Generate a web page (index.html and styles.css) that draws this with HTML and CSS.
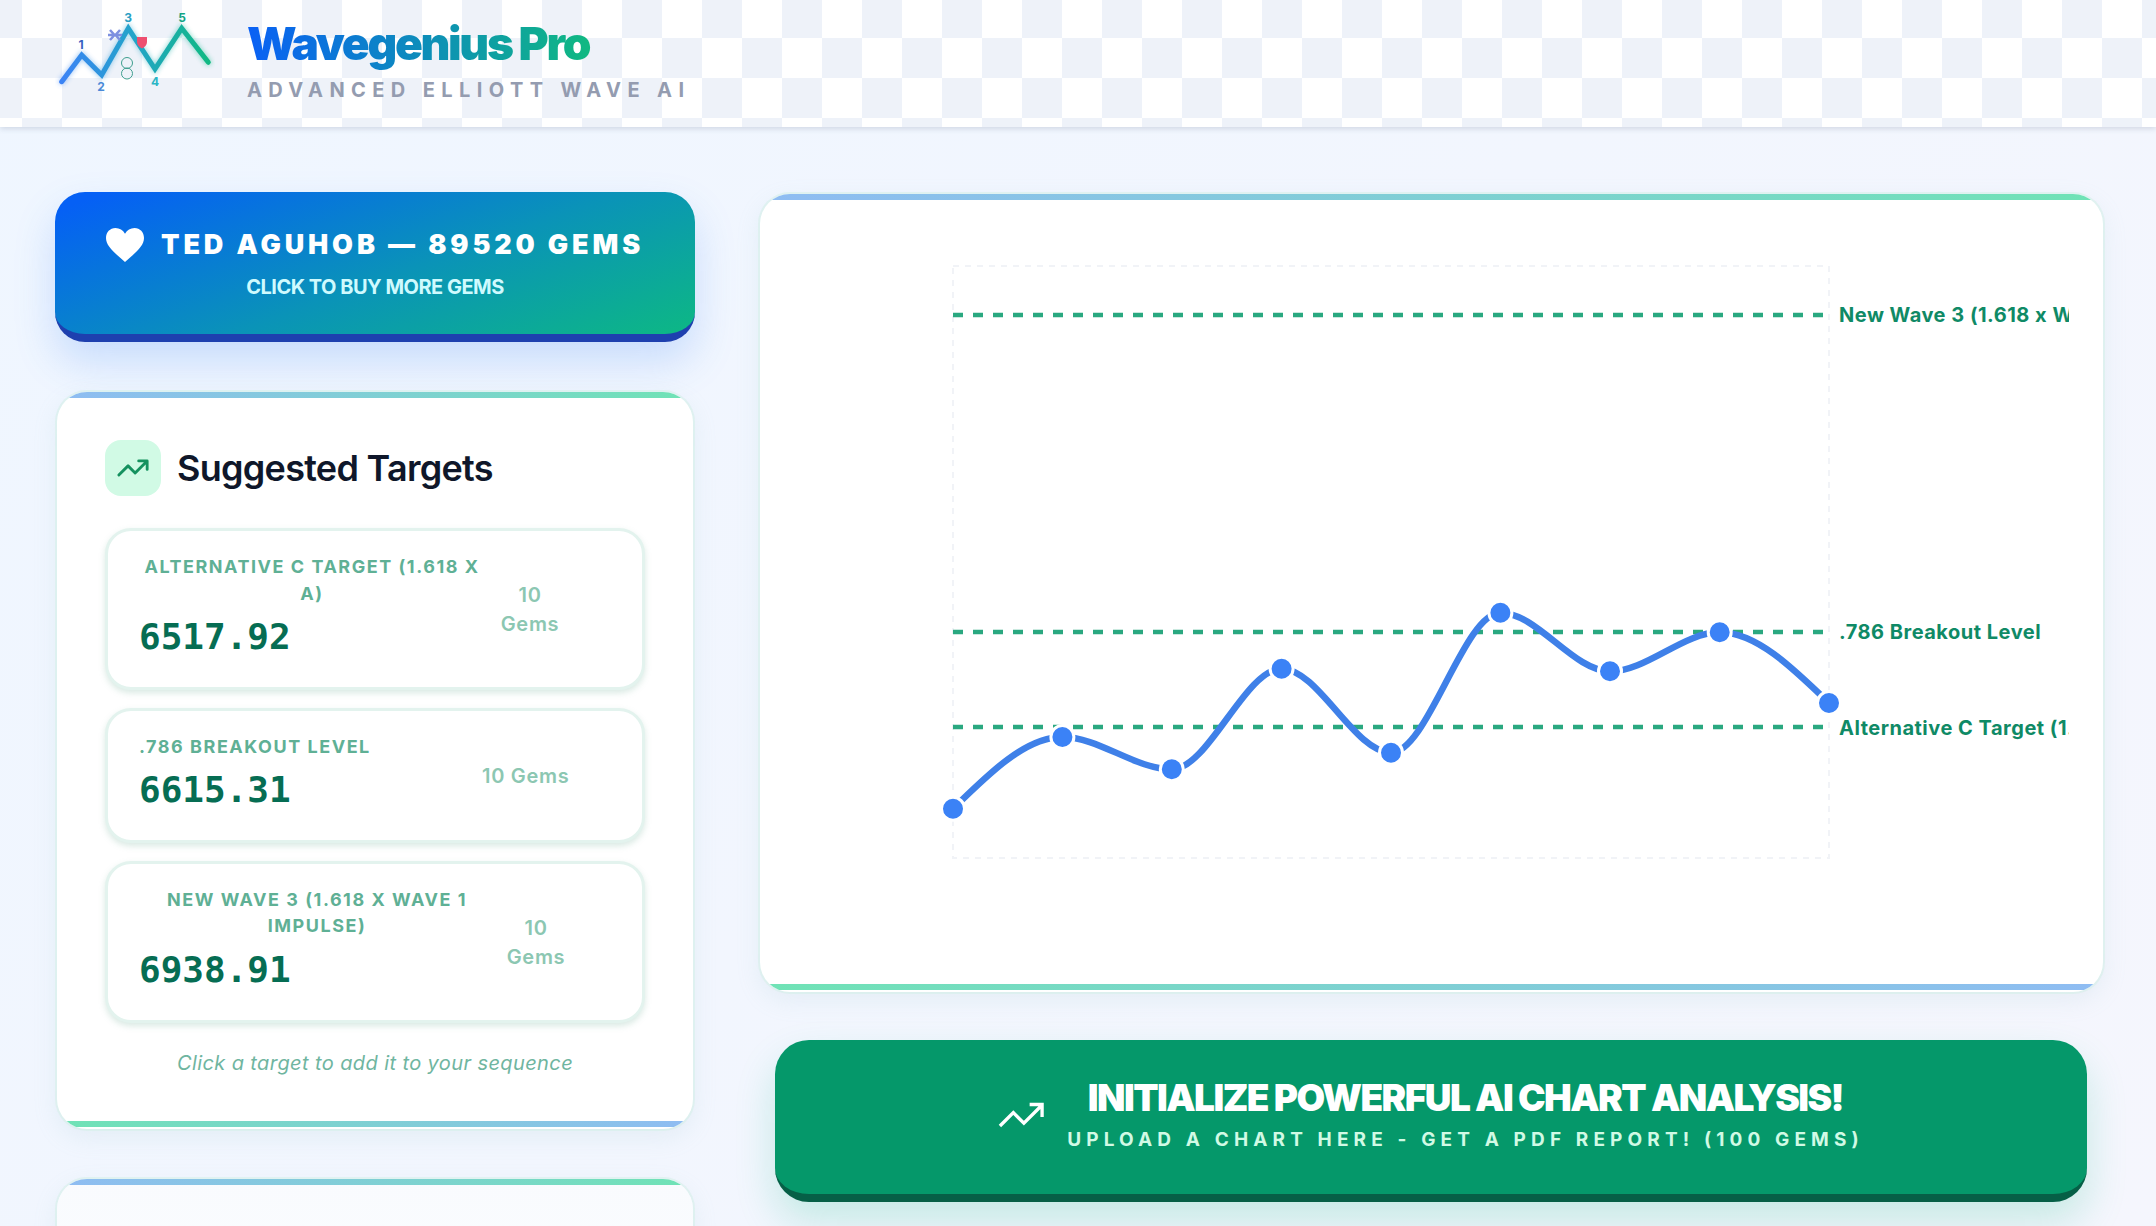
FILE: index.html
```html
<!DOCTYPE html>
<html lang="en">
<head>
<meta charset="utf-8">
<title>Wavegenius Pro</title>
<link rel="stylesheet" href="styles.css">
</head>
<body>
<header class="topbar">
  <svg class="logo" viewBox="55 0 160 127" width="160" height="127" aria-hidden="true">
    <defs>
      <linearGradient id="lg" gradientUnits="userSpaceOnUse" x1="60" y1="0" x2="210" y2="0">
        <stop offset="0" stop-color="#3b82f6"/><stop offset="0.5" stop-color="#22a5c8"/><stop offset="1" stop-color="#10b981"/>
      </linearGradient>
      <filter id="gl" x="-20%" y="-30%" width="140%" height="160%"><feGaussianBlur stdDeviation="2.5"/></filter>
    </defs>
    <polyline class="wave wave-glow" points="61.7,81.7 81.7,55 101.7,75 128.3,28.3 155,69 181.7,28.3 208.3,62.3" filter="url(#gl)"/>
    <polyline class="wave" points="61.7,81.7 81.7,55 101.7,75 128.3,28.3 155,69 181.7,28.3 208.3,62.3"/>
    <path class="mark-x" d="M110 30l4.500 5-4.500 5M120 30l-4.500 5 4.500 5M108 35h14"/>
    <path class="mark-shield" d="M137 37h10v5c0 3-2 5-5 6.500-3-1.500-5-3.500-5-6.500z"/>
    <circle class="mark-eight" cx="127" cy="63" r="5.500"/>
    <circle class="mark-eight" cx="127" cy="73.500" r="5.500"/>
    <text class="num n1" x="81" y="49">1</text>
    <text class="num n2" x="101" y="91">2</text>
    <text class="num n3" x="128" y="22">3</text>
    <text class="num n4" x="155" y="86">4</text>
    <text class="num n5" x="182" y="22">5</text>
  </svg>
  <div class="brand">
    <div class="brand-name">Wavegenius Pro</div>
    <div class="brand-tag">ADVANCED ELLIOTT WAVE AI</div>
  </div>
</header>

<main class="layout">
  <aside class="side">
    <button class="gems">
      <span class="gems-row">
        <svg class="heart" viewBox="0 0 38 32" width="38" height="34" preserveAspectRatio="none" aria-hidden="true"><path d="M19 32C8 23 0 17 0 9.500 0 4 4 0 9.500 0 13.500 0 17 2 19 5.500 21 2 24.500 0 28.500 0 34 0 38 4 38 9.500 38 17 30 23 19 32z"/></svg>
        <span class="gems-title">TED AGUHOB — 89520 GEMS</span>
      </span>
      <span class="gems-sub">CLICK TO BUY MORE GEMS</span>
    </button>

    <section class="card targets-card">
      <h2 class="card-head">
        <span class="tile">
          <svg viewBox="0 0 24 24" width="34" height="34" aria-hidden="true"><path d="M22 7l-8.500 8.500-5-5L2 17M16 7h6v6"/></svg>
        </span>
        Suggested Targets
      </h2>
      <div class="targets">
        <button class="target">
          <span class="info info-a">
            <span class="t-label">Alternative C Target (1.618 x A)</span>
            <span class="t-value">6517.92</span>
          </span>
          <span class="t-cost cost-a">10 Gems</span>
        </button>
        <button class="target">
          <span class="info info-b">
            <span class="t-label">.786 Breakout Level</span>
            <span class="t-value">6615.31</span>
          </span>
          <span class="t-cost cost-b">10 Gems</span>
        </button>
        <button class="target">
          <span class="info info-c">
            <span class="t-label">New Wave 3 (1.618 x Wave 1 Impulse)</span>
            <span class="t-value">6938.91</span>
          </span>
          <span class="t-cost cost-c">10 Gems</span>
        </button>
      </div>
      <p class="hint">Click a target to add it to your sequence</p>
    </section>

    <section class="card next-card"></section>
  </aside>

  <div class="content">
    <section class="card chart-card">
      <svg class="chart" viewBox="793 228 1276 730" width="1276" height="730" aria-hidden="true">
        <rect class="plot" x="953" y="266" width="876" height="592"/>
        <line class="lvl" x1="953" y1="315" x2="1829" y2="315"/>
        <line class="lvl" x1="953" y1="632" x2="1829" y2="632"/>
        <line class="lvl" x1="953" y1="727" x2="1829" y2="727"/>
        <text class="lvl-text" x="1839" y="322">New Wave 3 (1.618 x Wave 1 Impulse)</text>
        <text class="lvl-text" x="1839" y="639">.786 Breakout Level</text>
        <text class="lvl-text" x="1839" y="735">Alternative C Target (1.618 x A)</text>
        <path class="price" d="M953 808.700C989.500 772.850 1025.900 737 1062.400 737C1098.900 737 1135.300 769.300 1171.800 769.300C1208.300 769.300 1245.100 668.700 1281.600 668.700C1318.100 668.700 1354.500 752.700 1391 752.700C1427.500 752.700 1463.900 612.700 1500.400 612.700C1536.900 612.700 1573.500 671.300 1610 671.300C1646.500 671.300 1683.200 632.300 1719.700 632.300C1756.200 632.300 1792.500 667.650 1829 703"/>
        <g class="dots">
          <circle cx="953" cy="808.700" r="11.500"/>
          <circle cx="1062.400" cy="737" r="11.500"/>
          <circle cx="1171.800" cy="769.300" r="11.500"/>
          <circle cx="1281.600" cy="668.700" r="11.500"/>
          <circle cx="1391" cy="752.700" r="11.500"/>
          <circle cx="1500.400" cy="612.700" r="11.500"/>
          <circle cx="1610" cy="671.300" r="11.500"/>
          <circle cx="1719.700" cy="632.300" r="11.500"/>
          <circle cx="1829" cy="703" r="11.500"/>
        </g>
      </svg>
    </section>

    <button class="analyze">
      <svg class="analyze-icon" viewBox="0 0 48 28" width="46" height="27" aria-hidden="true"><path d="M2 25l14-14 11 11L46 3M33 2.500h13v13"/></svg>
      <span class="analyze-text">
        <span class="analyze-title">INITIALIZE POWERFUL AI CHART ANALYSIS!</span>
        <span class="analyze-sub">UPLOAD A CHART HERE - GET A PDF REPORT! (100 GEMS)</span>
      </span>
    </button>
  </div>
</main>
</body>
</html>
```

FILE: styles.css
```css
* { box-sizing: border-box; }
html, body { height: 100%; overflow: hidden; }
body {
  margin: 0;
  font-family: Inter, "Liberation Sans", sans-serif;
  background: linear-gradient(135deg, #eff6ff, #f5f6fd);
  color: #0f172a;
}
button { font: inherit; border: 0; cursor: pointer; padding: 0; }

/* header */
.topbar {
  height: 127px;
  display: flex;
  align-items: center;
  gap: 32px;
  padding-left: 55px;
  background-color: #fff;
  background-image: repeating-conic-gradient(#eef2f9 0 25%, #fff 0 50%);
  background-size: 80px 80px;
  background-position: 22px -2px;
  box-shadow: 0 2px 5px rgba(100, 116, 139, .22);
}
.logo { flex: none; }
.wave { fill: none; stroke: url(#lg); stroke-width: 5; stroke-linecap: round; stroke-linejoin: miter; }
.wave-glow { opacity: .45; stroke-width: 6; }
.mark-x { fill: none; stroke: #7d90e0; stroke-width: 2.500; }
.mark-shield { fill: #ee4f70; }
.mark-eight { fill: none; stroke: #3f9f8f; stroke-width: 1; }
.num { font-size: 12px; font-weight: 700; text-anchor: middle; }
.n1 { fill: #3560c0; }
.n2 { fill: #4a8ad8; }
.n3 { fill: #2a9fc4; }
.n4 { fill: #2ab5c5; }
.n5 { fill: #12a585; }
.brand { display: flex; flex-direction: column; margin-top: -10px; }
.brand-name {
  font-size: 46px;
  line-height: 56px;
  font-weight: 900;
  letter-spacing: -.05em;
  background: linear-gradient(90deg, #0a60f5, #10b981);
  background-clip: text;
  -webkit-background-clip: text;
  color: transparent;
  width: 344px;
}
.brand-tag {
  margin-top: 7px;
  font-size: 20px;
  line-height: 24px;
  font-weight: 700;
  letter-spacing: .32em;
  color: #949cb0;
  white-space: nowrap;
}

/* layout */
.layout {
  display: grid;
  grid-template-columns: 640px 1fr;
  column-gap: 65px;
  padding: 65px 53px 0 55px;
}
.side { display: flex; flex-direction: column; gap: 50px; }
.content { display: flex; flex-direction: column; gap: 48px; margin-top: 2px; }

/* gems button */
.gems {
  height: 150px;
  border-radius: 30px;
  border-bottom: 8px solid #1e40af;
  background: linear-gradient(160deg, #0560f5 5%, #0a93b8 55%, #0db884 100%);
  box-shadow: 0 20px 40px rgba(59, 130, 246, .22);
  color: #fff;
  display: flex;
  flex-direction: column;
  align-items: center;
  justify-content: center;
  gap: 13px;
}
.gems-row { display: flex; align-items: center; gap: 17px; }
.heart { fill: #fff; display: block; }
.gems-title {
  font-size: 27px;
  line-height: 34px;
  font-weight: 900;
  letter-spacing: .143em;
  white-space: nowrap;
}
.gems-sub {
  font-size: 20px;
  line-height: 24px;
  font-weight: 700;
  letter-spacing: -.025em;
  color: #cffafe;
}

/* cards */
.card {
  position: relative;
  overflow: hidden;
  background: #fff;
  border-radius: 30px;
  box-shadow: 0 0 0 2px rgba(209, 240, 230, .5), 0 8px 24px rgba(148, 190, 200, .16);
}
.card::before, .card::after {
  content: "";
  position: absolute;
  left: 0;
  right: 0;
  height: 6px;
}
.card::before { top: 0; background: linear-gradient(90deg, #8fbcf3, #6fe3b5); }
.card::after { bottom: 2px; background: linear-gradient(90deg, #6fe3b5, #8fbcf3); }

.targets-card { margin: 0 2px; height: 737px; padding: 48px 48px 0; }
.next-card { margin: 0 2px; height: 400px; flex: none; background: linear-gradient(#f9fbfe, #fff); }
.next-card::after { display: none; }
.card-head {
  margin: 0;
  display: flex;
  align-items: center;
  gap: 16px;
  font-size: 36px;
  line-height: 56px;
  font-weight: 600;
  letter-spacing: -.02em;
  color: #0f172a;
}
.tile {
  width: 56px;
  height: 56px;
  border-radius: 16px;
  background: #d1fae5;
  display: flex;
  align-items: center;
  justify-content: center;
}
.tile svg { fill: none; stroke: #15915f; stroke-width: 2; stroke-linecap: round; stroke-linejoin: round; }
.targets { margin-top: 32px; display: flex; flex-direction: column; gap: 17.500px; }
.target {
  display: flex;
  align-items: center;
  width: 540px;
  padding: 22px 0 28px 31px;
  border: 3px solid #e3f3ee;
  border-radius: 26px;
  background: #fff;
  box-shadow: 0 3px 6px rgba(120, 175, 155, .28);
  font-family: Inter, "Liberation Sans", sans-serif;
}
.info { display: flex; flex-direction: column; flex: none; }
.info-a { width: 346px; }
.info-b { width: 228px; }
.info-c { width: 356px; }
.t-label {
  padding-top: 1px;
  margin-bottom: -1px;
  font-size: 18px;
  line-height: 26.500px;
  font-weight: 700;
  letter-spacing: .085em;
  text-transform: uppercase;
  color: #5fb095;
  text-align: center;
}
.info-b .t-label { text-align: left; white-space: nowrap; }
.t-value {
  margin-top: 9px;
  font-family: "DejaVu Sans Mono", "Liberation Mono", monospace;
  font-size: 36px;
  line-height: 44px;
  font-weight: 700;
  color: #066d53;
  text-align: left;
}
.t-cost {
  font-size: 20px;
  line-height: 29px;
  font-weight: 600;
  letter-spacing: .035em;
  color: #8cc7b2;
  text-align: center;
  margin-top: 8px;
}
.cost-a { width: 60px; margin-left: 15px; }
.cost-b { margin-left: 115px; white-space: nowrap; }
.cost-c { width: 60px; margin-left: 11px; }
.hint {
  margin: 26px 0 0;
  font-size: 20px;
  line-height: 28px;
  font-style: italic;
  letter-spacing: .02em;
  color: #6fb5a0;
  text-align: center;
}

/* chart */
.chart-card {
  height: 798px;
  padding: 34px 0 0 33px;
}
.chart { display: block; }
.plot { fill: none; stroke: #f1f3f7; stroke-width: 2; stroke-dasharray: 6 6; }
.lvl { stroke: #2aa880; stroke-width: 4.500; stroke-dasharray: 10 10; }
.lvl-text { font-size: 20px; font-weight: 700; fill: #0f8a66; letter-spacing: .025em; }
.price { fill: none; stroke: #3f80e8; stroke-width: 6.500; }
.dots circle { fill: #3b82f6; stroke: #fff; stroke-width: 3; }

/* analyze button */
.analyze {
  margin: 0 16px 0 15px;
  height: 162px;
  padding-bottom: 6px;
  border-radius: 34px;
  border-bottom: 8px solid #065f46;
  background: #05986a;
  box-shadow: 0 20px 40px rgba(16, 185, 129, .2);
  color: #fff;
  display: flex;
  align-items: center;
  justify-content: center;
  gap: 23px;
}
.analyze-icon { fill: none; stroke: #fff; stroke-width: 3.500; margin-top: 2px; }
.analyze-text { display: flex; flex-direction: column; align-items: center; gap: 8px; }
.analyze-title {
  font-size: 37px;
  line-height: 44px;
  font-weight: 900;
  letter-spacing: -.042em;
  white-space: nowrap;
}
.analyze-sub {
  font-size: 19px;
  line-height: 24px;
  font-weight: 700;
  letter-spacing: .27em;
  color: #d1fae5;
  white-space: nowrap;
}
```
